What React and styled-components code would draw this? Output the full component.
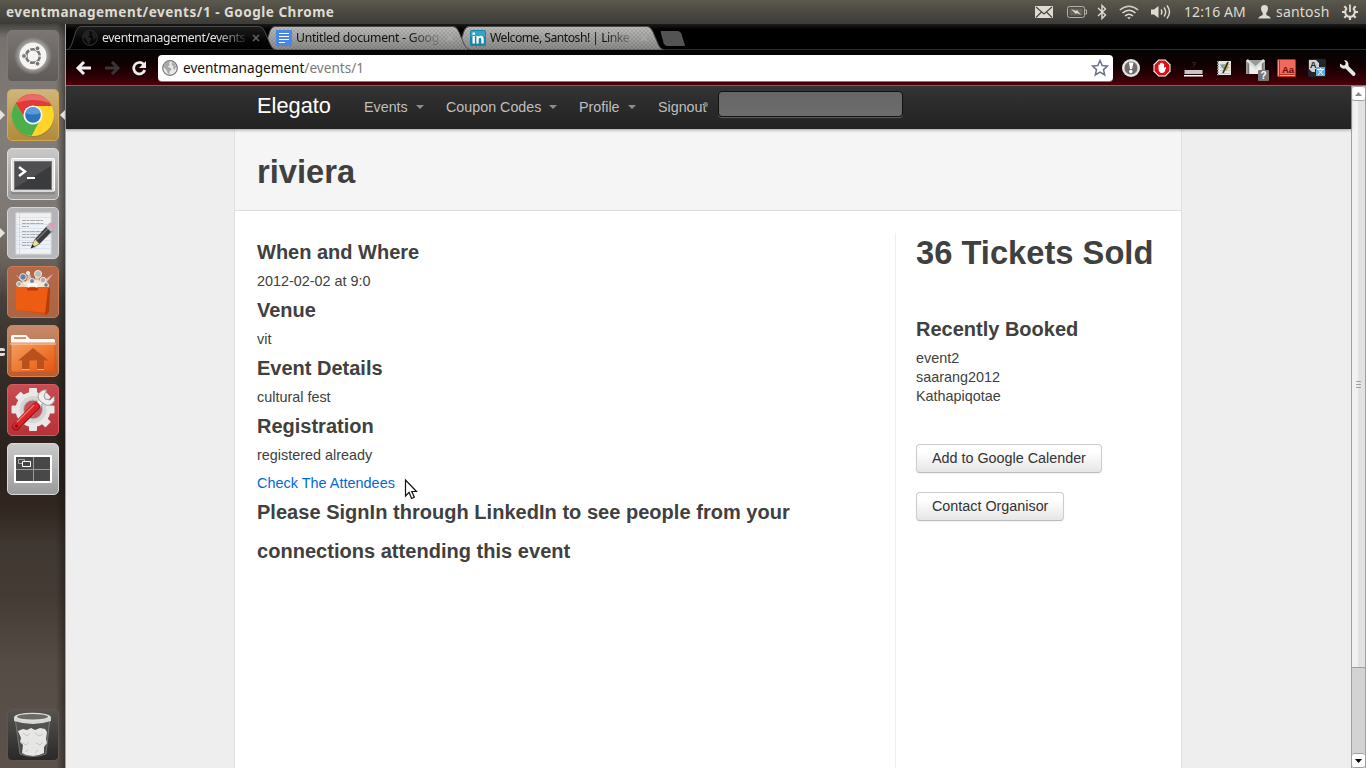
import React from "react";
import styled, { createGlobalStyle } from "styled-components";

const GlobalStyle = createGlobalStyle`
  * { box-sizing: border-box; }
  html, body { margin: 0; padding: 0; }
  body { width: 1366px; height: 768px; overflow: hidden; background: #eee; }
  svg { display: block; }
`;

const UI = `"Noto Sans", "Open Sans", sans-serif`;
const ARIAL = `"Liberation Sans", Arial, sans-serif`;

const Desktop = styled.div`
  width: 1366px;
  height: 768px;
  display: flex;
  flex-direction: column;
  overflow: hidden;
  position: relative;
`;

/* ---------- system panel ---------- */
const Panel = styled.header`
  height: 24px;
  flex: none;
  display: flex;
  align-items: center;
  background: linear-gradient(#5b584d, #3c3b37);
  color: #dfdbd2;
  font-family: ${UI};
`;
const WindowTitle = styled.div`
  font-size: 13.5px;
  font-weight: 700;
  line-height: 24px;
  padding-left: 6px;
  letter-spacing: 0.52px;
  white-space: nowrap;
  flex: 1;
`;
const Indicator = styled.div`
  width: ${(p) => p.$w}px;
  margin-right: ${(p) => p.$gap}px;
  font-size: 14px;
  letter-spacing: ${(p) => p.$spacing || "0"};
  line-height: 24px;
  white-space: nowrap;
  flex: none;
`;

/* ---------- launcher ---------- */
const Workspace = styled.div`
  flex: 1;
  display: flex;
  min-height: 0;
`;
const Launcher = styled.nav`
  width: 66px;
  flex: none;
  padding: 6px 0 7px 7px;
  display: flex;
  flex-direction: column;
  gap: 7px;
  border-right: 1px solid #a5a2a0;
  background: linear-gradient(90deg, transparent 56px, rgba(20, 15, 12, 0.45)),
    linear-gradient(#454340 0, #77726e 14px, #837d79 110px, #7e7874 190px, #67605b 240px, #46403b 275px,
      #362d28 340px, #2b211d 430px, #30251f 480px, #3f3731 520px, #443b35 570px, #554c45 640px, #5c524b 744px);
`;
const tones = {
  dash: ["#7b7673", "#5f5b58", "#7d7976"],
  gold: ["#d0b57c", "#b18a3a", "#d3a850"],
  silver: ["#c9c9c9", "#9b9b9b", "#dadada"],
  paper: ["#b3b2b5", "#b9b8bb", "#d5d4d6"],
  rust: ["#b4694b", "#ab6543", "#cf7a52"],
  folder: ["#c78a6a", "#b45e33", "#dc8350"],
  red: ["#c74c52", "#b53238", "#d95b60"],
  dark: ["#55534f", "#2a2928", "#5a5652"],
};
const Tile = styled.div`
  width: 52px;
  height: 52px;
  flex: none;
  border-radius: 5px;
  position: relative;
  border: 1px solid ${(p) => tones[p.$tone][2]};
  background: linear-gradient(${(p) => tones[p.$tone][0]}, ${(p) => tones[p.$tone][1]});
  margin-top: ${(p) => (p.$last ? "auto" : 0)};
  & > svg { position: absolute; left: -1px; top: -1px; }
`;
const Pip = styled.i`
  position: absolute;
  top: 20px;
  width: 0;
  height: 0;
  border: 5px solid transparent;
  ${(p) => (p.$right ? "left: 47px; border-right-color: #e6e4e2;" : "left: -8px; border-left-color: #e6e4e2;")}
`;
const PairPip = styled.i`
  position: absolute;
  left: -8px;
  top: 22px;
  width: 5px;
  height: 8px;
  border: solid #dedcda;
  border-width: 3px 0;
  border-radius: 0 2px 2px 0;
`;

/* ---------- browser chrome ---------- */
const Browser = styled.main`
  flex: 1;
  min-width: 0;
  display: flex;
  flex-direction: column;
`;
const TabStrip = styled.div`
  height: 26px;
  flex: none;
  display: flex;
  padding-top: 2px;
  background: linear-gradient(#1b1b1b, #000 6px);
  border-bottom: 1px solid #2c2c2c;
`;
const Tab = styled.div`
  position: relative;
  width: 210px;
  height: 24px;
  flex: none;
  margin-right: -16px;
  padding-left: 16px;
  display: flex;
  align-items: center;
  z-index: ${(p) => p.$z};
  font: 12.2px ${UI};
  color: ${(p) => (p.$active ? "#e4e4e4" : "#111")};
`;
const TabShape = styled.svg`
  position: absolute;
  left: 0;
  top: 0;
  z-index: -1;
`;
const TabLabel = styled.span`
  width: 146px;
  margin-left: 4px;
  white-space: nowrap;
  line-height: 22px;
  letter-spacing: ${(p) => p.$spacing};
  mask-image: linear-gradient(90deg, #000 114px, rgba(0, 0, 0, 0.12) 144px);
`;
const TabClose = styled.svg`
  margin-left: 4px;
`;
const NewTab = styled.svg`
  margin: 5px 0 0 12px;
`;
const Toolbar = styled.div`
  height: 36px;
  flex: none;
  display: flex;
  align-items: center;
  padding-left: 9px;
  background: linear-gradient(#050505 0, #100001 14px, #2b0004 26px, #500008);
  border-bottom: 1px solid #85696b;
`;
const NavButton = styled.span`
  width: 18px;
  margin-right: 10px;
`;
const Omnibox = styled.div`
  width: 955px;
  height: 26px;
  margin-left: -1px;
  display: flex;
  align-items: center;
  background: #fff;
  border-radius: 4px;
  box-shadow: 0 1px 0 #8e7274;
  padding: 0 4px;
  font: 13.6px ${UI};
  color: #111;
`;
const Url = styled.span`
  margin-left: 5px;
  flex: 1;
  line-height: 24px;
`;
const UrlPath = styled.span`
  color: #7a7a7a;
`;
const Extensions = styled.div`
  display: flex;
  margin-left: 9px;
  gap: 13px;
`;

/* ---------- page ---------- */
const Viewport = styled.div`
  flex: 1;
  display: flex;
  min-height: 0;
  background: #eee;
  font-family: ${ARIAL};
`;
const Page = styled.div`
  width: 1285px;
  display: flex;
  flex-direction: column;
`;
const Navbar = styled.div`
  height: 43px;
  flex: none;
  display: flex;
  align-items: center;
  padding: 0 0 2px 191px;
  position: relative;
  background: linear-gradient(#333, #222);
  box-shadow: 0 1px 3px rgba(0, 0, 0, 0.35);
`;
const Brand = styled.a`
  width: 107px;
  font-size: 21.8px;
  line-height: 40px;
  color: #fff;
  padding-bottom: 1px;
`;
const NavItem = styled.a`
  width: ${(p) => p.$w}px;
  display: flex;
  align-items: center;
  font-size: 14.3px;
  line-height: 40px;
  color: #bfbfbf;
  white-space: nowrap;
`;
const Caret = styled.i`
  margin-left: 8px;
  border: 4px solid transparent;
  border-top-color: #8e8e8e;
  border-bottom: 0;
`;
const Dot = styled.i`
  width: 4px;
  height: 5px;
  margin: -5px 0 0 -3px;
  border-radius: 2px;
  background: #777;
`;
const Search = styled.div`
  width: 185px;
  height: 26px;
  margin-top: -6px;
  border: 1px solid #111;
  border-radius: 4px;
  background: linear-gradient(#666, #6c6c6c);
  box-shadow: 0 1px 0 rgba(255, 255, 255, 0.25);
`;
const Sheet = styled.section`
  flex: 1;
  width: 948px;
  margin-left: 168px;
  display: flex;
  flex-direction: column;
  border: solid #e0e0e0;
  border-width: 0 1px;
  background: #fff;
`;
const SheetHeader = styled.div`
  height: 82px;
  flex: none;
  padding: 23px 22px 0;
  background: #f5f5f5;
  border-bottom: 1px solid #ddd;
`;
const H1 = styled.h1`
  margin: 0;
  font-size: 32.7px;
  line-height: 40px;
  font-weight: 700;
  color: #404040;
  white-space: nowrap;
`;
const H3 = styled.h3`
  margin: 0;
  font-size: 20px;
  line-height: 39px;
  font-weight: 700;
  letter-spacing: ${(p) => p.$spacing || "0"};
  color: #404040;
`;
const P = styled.p`
  margin: 0;
  font-size: 14.4px;
  line-height: 19px;
  color: #404040;
`;
const AttendeeLink = styled.a`
  display: block;
  margin-top: 9px;
  font-size: 14.4px;
  letter-spacing: 0.03px;
  line-height: 19px;
  color: #0069d6;
`;
const Columns = styled.div`
  flex: 1;
  display: flex;
`;
const Details = styled.div`
  width: 660px;
  padding: 22px 80px 0 22px;
`;
const Aside = styled.aside`
  flex: 1;
  margin-top: 22px;
  padding-left: 20px;
  border-left: 1px solid #eee;
  display: flex;
  flex-direction: column;
  align-items: flex-start;
`;
const Recent = styled.div`
  margin: 37px 0 19px;
`;
const Button = styled.button`
  height: 29px;
  padding: 0 15px 2px;
  margin-top: 19px;
  font: 14.35px/18px ${ARIAL};
  color: #333;
  white-space: nowrap;
  background: linear-gradient(#fff, #fff 25%, #e6e6e6);
  border: 1px solid #ccc;
  border-bottom-color: #bbb;
  border-radius: 4px;
  box-shadow: 0 1px 2px rgba(0, 0, 0, 0.05);
`;
const Scrollbar = styled.div`
  width: 15px;
  display: flex;
  flex-direction: column;
  background: #d3d3d3;
  border: solid #a0a0a0;
  border-width: 0 1px;
`;
const ArrowBox = styled.div`
  height: 15px;
  flex: none;
  display: flex;
  align-items: center;
  justify-content: center;
  background: #fff;
  border: solid #a0a0a0;
  border-width: 1px 0;
  border-radius: 3px;
`;
const Thumb = styled.div`
  height: 567px;
  display: flex;
  align-items: center;
  justify-content: center;
  background: linear-gradient(90deg, #f1f1f1 50%, #e2e2e2 50%);
  border-bottom: 1px solid #a0a0a0;
`;
const Track = styled.div`
  flex: 1;
`;
const Pointer = styled.svg`
  position: absolute;
  left: 404px;
  top: 478px;
`;

/* ---------- launcher drawings ---------- */
const DashIcon = () => (
  <svg width="52" height="52" viewBox="0 0 52 52">
    <defs><radialGradient id="dg"><stop offset=".55" stopColor="#fff" stopOpacity=".6" /><stop offset="1" stopColor="#fff" stopOpacity="0" /></radialGradient></defs>
    <circle cx="26" cy="26" r="19" fill="url(#dg)" />
    <circle cx="26" cy="26" r="13.5" fill="#f4f4f4" />
    <circle cx="26" cy="26" r="6.8" fill="none" stroke="#7a7572" strokeWidth="2.6" strokeDasharray="12.8 1.4" strokeDashoffset="-0.7" />
    <g fill="#7a7572" stroke="#f4f4f4" strokeWidth="1"><circle cx="17" cy="26" r="2.4" /><circle cx="30.5" cy="18.3" r="2.4" /><circle cx="30.5" cy="33.7" r="2.4" /></g>
  </svg>
);
const ChromeIcon = () => (
  <svg width="52" height="52" viewBox="0 0 52 52">
    <circle cx="26" cy="27" r="21.4" fill="#8f6d26" opacity=".35" />
    <circle cx="26" cy="26" r="21" fill="#ffd42a" />
    <path d="M26 17H44.900A21 21 0 0 0 8.600 14.200L18 30Z" fill="#e23b37" />
    <path d="M8.600 14.200A21 21 0 0 0 24.500 47L33 31 26 33 18 30Z" fill="#4bb04a" />
    <circle cx="26" cy="26" r="9.6" fill="#f6f6f6" />
    <circle cx="26" cy="26" r="7.800" fill="#2d73bd" />
    <path d="M18.500 24a7.800 7.800 0 0 1 15 0q-7.500 3-15 0Z" fill="#5b9ad8" />
    <path d="M9 14A21 21 0 0 1 43 14Q26 8 9 14Z" fill="#fff" opacity=".25" />
  </svg>
);
const TerminalIcon = () => (
  <svg width="52" height="52" viewBox="0 0 52 52">
    <rect x="4.500" y="10.500" width="43" height="35" rx="1" fill="#e5e5e5" stroke="#fff" />
    <rect x="4" y="43" width="44" height="3.500" fill="#8a8a8a" /><rect x="5" y="42" width="42" height="2" fill="#d8d8d8" />
    <rect x="7.500" y="13.500" width="37" height="28" fill="#3a3b3c" stroke="#777" />
    <path d="M8 14H44V18L8 40Z" fill="#58595a" opacity=".7" />
    <path d="m12 19 6 4.500-6 4.500" fill="none" stroke="#fff" strokeWidth="2.400" />
    <rect x="20" y="29" width="8" height="2" fill="#fff" />
  </svg>
);
const EditorIcon = () => (
  <svg width="52" height="52" viewBox="0 0 52 52">
    <rect x="9" y="6" width="35" height="41" fill="#f0f1f4" stroke="#ddd" />
    <path d="M9 10.500H44M9 17.500H44M9 21.500H44M9 25.500H44M9 29.500H44M9 33.500H44M9 37.500H44M9 41.500H44" stroke="#dbe3ee" />
    <path d="M12.500 6V47" stroke="#ecd0d3" />
    <path d="M15 13.500H36M15 16.500H37M15 19.500H22M15 24.500H37M15 27.500H35M15 30.500H30M15 35.500H26M15 38.500H24" stroke="#aaa" strokeWidth="1" strokeDasharray="4 .6 3 .7 5 .5" />
    <path d="M26 40 45 23" stroke="#777" strokeWidth="4" opacity=".4" />
    <path d="m28 32 12-13 5 5-12.500 13Z" fill="#3b3b3b" /><path d="m29.500 33 12-12" stroke="#777" strokeWidth="1.200" />
    <path d="m28 32 4.500 5-8.500 4Z" fill="#ece28f" stroke="#444" strokeWidth=".5" /><path d="m25.500 37.500-1.800 4 4-1.700Z" fill="#222" />
    <path d="m39 20 2.500-3 5 5-2.500 3Z" fill="#b9b9b9" /><path d="m41.500 17 1.500-1.300q3-.7 4.800 2l-.8 3.300-1 1Z" fill="#e996c2" />
  </svg>
);
const BagIcon = () => (
  <svg width="52" height="52" viewBox="0 0 52 52">
    <path d="m26 28-18-20 11 9 3-12 4 12 5-13 2 13 13-9-12 16Z" fill="#fff" opacity=".55" />
    <ellipse cx="27" cy="20" rx="15" ry="6" fill="#fff4e4" opacity=".75" />
    <g stroke="#eee" strokeWidth="1"><circle cx="16" cy="11" r="3.300" fill="#5886a8" /><circle cx="31" cy="8" r="3.500" fill="#bbb" /><circle cx="25" cy="15" r="2.500" fill="#6d85a5" /><circle cx="36" cy="14" r="2.800" fill="#c3a49a" /><circle cx="12" cy="18" r="2.400" fill="#aaa" /><circle cx="39" cy="19" r="2.300" fill="#777" /><circle cx="21" cy="7" r="1.500" fill="#ddd" /></g>
    <path d="M9 21H41L43 22 41 49 9 44Z" fill="#d94b0c" /><path d="M9 21H41V47L9 44Z" fill="#ee5c13" />
    <path d="m41 22 2 1-1 23-4 3Z" fill="#b83c08" />
    <path d="M21.500 23V18.500H29.500V23" fill="none" stroke="#fff" strokeWidth="2" /><rect x="20" y="21.500" width="11" height="3" fill="#bf3904" />
  </svg>
);
const HomeIcon = () => (
  <svg width="52" height="52" viewBox="0 0 52 52">
    <defs><linearGradient id="hf" x2="1" y2="1"><stop stopColor="#f3a066" /><stop offset=".5" stopColor="#ee7b33" /><stop offset="1" stopColor="#e75212" /></linearGradient></defs>
    <path d="M4 17V11.500Q4 10 5.500 10H19L23 14H46.500Q48 14 48 15.500V20H4Z" fill="#fff" /><rect x="7" y="12" width="12" height="2" fill="#e79060" />
    <path d="M4 18H48V45Q48 47 46 47H6Q4 47 4 45Z" fill="url(#hf)" stroke="#d5501a" strokeWidth=".7" />
    <path d="M3 19H49" stroke="#ffd5b5" />
    <path d="m26 23-15 12.500h4V45h7.500V35.500h7.500V45H37V35.500h4.500Z" fill="#bb501f" /><path d="M15 44.500h7.500M30 44.500h7" stroke="#f5b68c" />
  </svg>
);
const SettingsIcon = () => (
  <svg width="52" height="52" viewBox="0 0 52 52">
    {[0, 45, 90, 135].map((a) => <rect key={a} x="22" y="4" width="8" height="43" rx="1" fill="#e8e8e8" transform={`rotate(${a} 26 25.500)`} />)}
    <circle cx="26" cy="25.500" r="17.500" fill="#e8e8e8" /><circle cx="26" cy="25.500" r="13.500" fill="#d5d5d5" /><circle cx="26" cy="25.500" r="9.500" fill="#c3555a" stroke="#bbb" />
    <path d="m23 31 13-15" stroke="#aaa" strokeWidth="5.500" /><path d="m23 30 13-15" stroke="#f4f4f4" strokeWidth="4.500" />
    <path d="M33 17q-4-5 0-9 3-3 7-2l-3 5 1 4 5 1 4-4q2 5-2 8-5 3-9-1Z" fill="#eee" stroke="#888" strokeWidth=".8" />
    <path d="m9 42.500 20-20" stroke="#8f1114" strokeWidth="8" strokeLinecap="round" /><path d="m9 42 20-20" stroke="#dc2226" strokeWidth="6.500" strokeLinecap="round" /><path d="m10 38 17-17" stroke="#f17a7c" strokeWidth="1.300" />
    <circle cx="9.500" cy="42" r="1.500" fill="#7c1013" />
  </svg>
);
const WorkspaceIcon = () => (
  <svg width="52" height="52" viewBox="0 0 52 52">
    <rect x="7" y="12" width="38" height="28" rx="1" fill="#fff" />
    <rect x="9" y="14" width="34" height="24" fill="#484848" />
    <path d="M9 26.500H43M26.500 14V38" stroke="#9b9b9b" /><path d="M11.500 16.500h6v4h-6Z" fill="none" stroke="#aaa" /><path d="M15.500 18.500h8v5h-8Z" fill="#444" stroke="#fff" />
  </svg>
);
const TrashIcon = () => (
  <svg width="52" height="52" viewBox="0 0 52 52">
    <path d="M8 8H43L39 45Q26 50 13 45Z" fill="#5a5957" opacity=".65" stroke="#aaa" strokeWidth=".8" />
    <path d="m11 22 5-2 4 1 4-2 4 2 5-2 5 1 2 3-1 7 1 4-3 4v6l-5 2-6 1-7-1-4-2 1-8-3-3 1-4Z" fill="#e6e6e4" />
    <path d="m16 24 4 3 3-3M28 24l4 3 4-2M14 33l5 3 3-3M29 34l4 2 3-3M19 43l2-3M28 44l3-3" fill="none" stroke="#c6c6c3" />
    <ellipse cx="25.500" cy="8.500" rx="18.500" ry="4.800" fill="#dcdcda" /><ellipse cx="25.500" cy="7.800" rx="15.500" ry="2.800" fill="#6b6a68" />
    <path d="M7 9q18 7 37 0v3q-18 6-37 0Z" fill="#d6d6d4" />
  </svg>
);

/* ---------- panel drawings ---------- */
const fg = "#dfdbd2";
const MailIcon = () => (
  <svg width="18" height="12" viewBox="0 0 18 12"><rect width="18" height="12" fill={fg} /><path d="m1 1 8 7 8-7M1 11.500l5.500-5.500M17 11.500 11.500 6" fill="none" stroke="#4a4840" strokeWidth="1.200" /></svg>
);
const BatteryIcon = () => (
  <svg width="20" height="12" viewBox="0 0 20 12"><rect x=".5" y=".5" width="17" height="11" rx="2" fill="none" stroke="#b4b1a7" /><path d="M18 4h1.500v4H18" fill="none" stroke="#b4b1a7" /><rect x="2.500" y="2.500" width="13" height="7" fill="#66635a" /><path d="m4 3 5 2 1-1 4 5-4-2-1 1Z" fill={fg} /></svg>
);
const BluetoothIcon = () => (
  <svg width="10" height="16" viewBox="0 0 10 16"><path d="m1 4 7.500 7L5 14.500V1.500L8.500 5 1 12" fill="none" stroke={fg} strokeWidth="1.400" /></svg>
);
const WifiIcon = () => (
  <svg width="20" height="15" viewBox="0 0 20 15" fill="none" stroke={fg} strokeWidth="1.600"><path d="M.8 5Q10-2.500 19.200 5" opacity=".9" /><path d="M3.500 8Q10 2.500 16.500 8" /><path d="M6 11Q10 7.500 14 11" /><path d="m8 12.300h4l-2 2Z" fill={fg} stroke="none" /></svg>
);
const SoundIcon = () => (
  <svg width="20" height="16" viewBox="0 0 20 16"><path d="M0 5.500h3L7.500 2v12L3 10.500H0Z" fill={fg} /><path d="M10 5.500q1.800 2.500 0 5M13 3.500q3.400 4.500 0 9M16 1.500q5 6.500 0 13" fill="none" stroke={fg} strokeWidth="1.400" /></svg>
);
const UserIcon = () => (
  <svg width="13" height="14" viewBox="0 0 13 14"><path d="M3 3.500Q3 0 6.500 0T10 3.500Q9.800 7 8.300 8v2q3.700 1 4.700 3.500H0Q1 11 4.700 10V8Q3.200 7 3 3.500Z" fill={fg} /></svg>
);
const PowerIcon = () => (
  <svg width="16" height="16" viewBox="0 0 16 16"><g stroke={fg} strokeWidth="2.200"><path d="M8 13v3M0 8h3M13 8h3M2.300 2.300l2 2M13.700 2.300l-2 2M2.300 13.700l2-2M13.700 13.700l-2-2" /></g><path d="M5 4.200a4.800 4.800 0 1 0 6 0" fill="none" stroke={fg} strokeWidth="2" /><path d="M8 .5V8" stroke={fg} strokeWidth="1.800" /></svg>
);

/* ---------- browser drawings ---------- */
const Globe = ({ dim }) => (
  <svg width="16" height="16" viewBox="0 0 16 16">
    <circle cx="8" cy="8" r="7.300" fill={dim ? "#090909" : "#e8e8e8"} stroke={dim ? "#2b2b2b" : "#747474"} strokeWidth="1.200" />
    <path d="m2 4 3-2.500 3 .5-1 2 1 1-2 1.500 1 1 2 .5.500 1.500-2 2V14L6 13.500 4.500 10 2 7.500ZM10 2l3 2 1 3-1.500 3-1.500-2 .5-2-2-1Z" fill={dim ? "#232323" : "#a8a8a8"} />
  </svg>
);
const DocsIcon = () => (
  <svg width="16" height="16" viewBox="0 0 16 16"><rect width="16" height="16" fill="#4a86e8" /><path d="M3 3.500h10M3 6.500h10M3 9.500h10M3 12.500h6" stroke="#fff" strokeWidth="1.200" /></svg>
);
const LinkedinIcon = () => (
  <svg width="16" height="16" viewBox="0 0 16 16"><rect width="16" height="16" rx="1.500" fill="#1686ae" /><rect x="1" y="1" width="14" height="6" fill="#36a2c6" /><path d="M2.500 6h2.400v7.500H2.500ZM2.500 2.500h2.400v2.200H2.500ZM6.400 6h2.300v1q2-2 4-.600 1 .8 1 2.600v4.500h-2.400V9.500q0-1.700-1.200-1.700-1.400 0-1.400 1.700v4H6.400Z" fill="#fff" /></svg>
);
const tabPath = "M0 24Q3 23 4.500 19L9 5Q10.500.500 14 .500H192Q195.500.500 197.500 5L203.500 19Q205 23 209 24Z";
const TabBack = ({ active }) => (
  <TabShape width="212" height="24" viewBox="0 0 212 24">
    <defs>
      <linearGradient id="tg" x2="0" y2="1"><stop stopColor="#bdbdbb" /><stop offset="1" stopColor="#888" /></linearGradient>
      <linearGradient id="ta" x2="0" y2="1"><stop stopColor="#1d1d1d" /><stop offset=".6" stopColor="#050505" /><stop offset="1" stopColor="#000" /></linearGradient>
      <pattern id="weave" width="4" height="4" patternUnits="userSpaceOnUse"><path d="M0 0h2v2H0ZM2 2h2v2H2Z" fill="#000" opacity=".09" /></pattern>
    </defs>
    <g transform="translate(1 0)">
      <path d={tabPath} fill={active ? "url(#ta)" : "url(#tg)"} stroke={active ? "#484848" : "#4c4c4c"} strokeWidth="1" />
      {!active && <path d={tabPath} fill="url(#weave)" />}
    </g>
  </TabShape>
);
const Close = ({ color }) => (
  <TabClose width="8" height="8" viewBox="0 0 8 8"><path d="m1 1 6 6m0-6L1 7" stroke={color} strokeWidth="1.500" /></TabClose>
);
const Arrow = ({ flip, color }) => (
  <svg width="18" height="18" viewBox="0 0 18 18"><path d={flip ? "M2 9H14M9 3l6 6-6 6" : "M16 9H4M9 3 3 9l6 6"} fill="none" stroke={color} strokeWidth="3" /></svg>
);
const Reload = () => (
  <svg width="18" height="18" viewBox="0 0 18 18"><path d="M12.500 5.200A5.700 5.700 0 1 0 13.800 11" fill="none" stroke="#eee" strokeWidth="2.700" /><path d="M15 2v7H8Z" fill="#eee" /></svg>
);
const Star = () => (
  <svg width="18" height="18" viewBox="0 0 18 18"><path d="m9 1.500 2.200 5 5.300.500-4 3.600 1.200 5.400L9 13.200 4.300 16l1.200-5.400-4-3.600 5.300-.500Z" fill="#fff" stroke="#66718c" strokeWidth="1.500" /></svg>
);
const Ext1 = () => (
  <svg width="18" height="18" viewBox="0 0 18 18"><circle cx="9" cy="9" r="9" fill="#e2e2e2" /><circle cx="9" cy="9" r="7" fill="#6e6e6e" stroke="#f4f4f4" strokeWidth=".8" /><path d="M7 3.500h4.500L10 10H8Z" fill="#fff" /><circle cx="8.800" cy="12.500" r="1.700" fill="#fff" /></svg>
);
const Ext2 = () => (
  <svg width="18" height="18" viewBox="0 0 18 18"><path d="M5.500.5h7l5 5v7l-5 5h-7l-5-5v-7Z" fill="#fff" /><path d="M6 1.500h6L16.500 6v6L12 16.500H6L1.500 12V6Z" fill="#d80f12" /><path d="M5.500 10V6q.8-.8 1.400 0V4.500q.8-.8 1.400 0V4q.8-.8 1.400 0v1q.8-.8 1.400 0v4l1-1q1.500-.2 1 1L11.500 13q-1 1-3 1-2.500-.3-3-4Z" fill="#fff" /></svg>
);
const Small = styled.text`
  font-family: ${ARIAL};
`;
const Ext3 = () => (
  <svg width="19" height="18" viewBox="0 0 19 18"><Small x="7.500" y="8" fontSize="8" fill="#4a4a4a">?</Small><rect x=".5" y="11" width="18" height="4" fill="#c5c5c5" /><rect y="16" width="19" height="1.500" fill="#fff" /></svg>
);
const Ext4 = () => (
  <svg width="18" height="18" viewBox="0 0 18 18"><rect x="3" y="2" width="13" height="14" fill="#e6e6e0" /><path d="M5 5.500h10M5 8.500h10M5 11.500h10M5 14.500h10" stroke="#c4c4bd" /><path d="M3 2v15" stroke="#999" strokeWidth="2" strokeDasharray="1.300 1.300" /><path d="m5 6 7-1-2 7Z" fill="#67a7b6" /><path d="m9 6 4-3 .5 6-3 3Z" fill="#e4a329" /><path d="m8 14 5-11" stroke="#28353b" strokeWidth="1.800" /></svg>
);
const Ext5 = () => (
  <svg width="23" height="22" viewBox="0 0 23 22"><rect y="1" width="19" height="14" fill="#9a9a9a" /><path d="M2.500 15V2l7 7 7-7V15" fill="#eee" stroke="#777" strokeWidth="1.500" /><path d="m1 1 8.500 8L18 1" fill="none" stroke="#ddd" strokeWidth="2.500" /><rect x="12" y="11" width="11" height="11" rx="1" fill="#777" /><Small x="14.500" y="20" fontSize="10" fontWeight="700" fill="#fff">?</Small></svg>
);
const Ext6 = () => (
  <svg width="19" height="18" viewBox="0 0 19 18"><rect width="19" height="18" rx="1.500" fill="#c92a1d" /><rect x="3" y="1" width="15" height="14" fill="#ef6a5c" /><path d="M1.500 1v16" stroke="#f6948a" /><path d="M3 16.500h15" stroke="#f8b4aa" /><Small x="5" y="14" fontSize="9.500" fontWeight="700" fill="#6b0c07">Aa</Small></svg>
);
const Ext7 = () => (
  <svg width="18" height="18" viewBox="0 0 18 18"><rect width="18" height="18" rx="2" fill="#23272c" /><path d="M1 1h7l3 3v6H7v3H4l-3-3Z" fill="#d2d2d2" /><Small x="2" y="8.500" fontSize="9" fontWeight="700" fill="#222">A</Small><rect x="8" y="8" width="9" height="9" fill="#69a8de" /><path d="M9 10.500h7M12.500 9v1.500M10 16l4.500-5M15 16l-4-4.500" stroke="#fff" strokeWidth="1" /></svg>
);
const Wrench = () => (
  <svg width="18" height="18" viewBox="0 0 18 18"><path d="M1 4.500q-.7 5 4 5.300l1.500-.3 7.500 7.500q2.500 0 2.500-2.800L9.500 7q.5-5.500-4.500-6L6.800 4 6 6.300 4 6.600Z" fill="#e8e8e8" /></svg>
);

const apps = [
  { tone: "dash", Icon: DashIcon },
  { tone: "gold", Icon: ChromeIcon, left: true, right: true },
  { tone: "silver", Icon: TerminalIcon },
  { tone: "paper", Icon: EditorIcon, left: true },
  { tone: "rust", Icon: BagIcon },
  { tone: "folder", Icon: HomeIcon, pair: true },
  { tone: "red", Icon: SettingsIcon },
  { tone: "silver", Icon: WorkspaceIcon },
];
const details = [
  ["When and Where", "2012-02-02 at 9:0"],
  ["Venue", "vit"],
  ["Event Details", "cultural fest"],
  ["Registration", "registered already"],
];
const ExtSlot = styled.span`
  width: 18px;
  height: 18px;
`;

export default function App() {
  return (
    <Desktop>
      <GlobalStyle />
      <Panel>
        <WindowTitle>eventmanagement/events/1 - Google Chrome</WindowTitle>
        <Indicator $w={18} $gap={14}><MailIcon /></Indicator>
        <Indicator $w={20} $gap={10}><BatteryIcon /></Indicator>
        <Indicator $w={10} $gap={12}><BluetoothIcon /></Indicator>
        <Indicator $w={20} $gap={12}><WifiIcon /></Indicator>
        <Indicator $w={20} $gap={13}><SoundIcon /></Indicator>
        <Indicator $w={62} $gap={12} $spacing="0.1px">12:16 AM</Indicator>
        <Indicator $w={13} $gap={5}><UserIcon /></Indicator>
        <Indicator $w={54} $gap={12} $spacing="0.2px">santosh</Indicator>
        <Indicator $w={16} $gap={8}><PowerIcon /></Indicator>
      </Panel>
      <Workspace>
        <Launcher>
          {apps.map(({ tone, Icon, left, right, pair }, i) => (
            <Tile key={i} $tone={tone}>
              <Icon />
              {left && <Pip />}
              {right && <Pip $right />}
              {pair && <PairPip />}
            </Tile>
          ))}
          <Tile $tone="dark" $last><TrashIcon /></Tile>
        </Launcher>
        <Browser>
          <TabStrip>
            <Tab $active $z={3}><TabBack active /><Globe dim /><TabLabel $spacing="-0.35px">eventmanagement/events</TabLabel><Close color="#666" /></Tab>
            <Tab $z={2}><TabBack /><DocsIcon /><TabLabel $spacing="-0.25px">Untitled document - Goog</TabLabel><Close color="#aaa" /></Tab>
            <Tab $z={1}><TabBack /><LinkedinIcon /><TabLabel $spacing="-0.52px">Welcome, Santosh! | Linke</TabLabel><Close color="#aaa" /></Tab>
            <NewTab width="26" height="15" viewBox="0 0 26 15"><path d="M1 .500H18Q20 .500 21 3L24.500 14.500H7Q5 14.500 4 12Z" fill="#535353" stroke="#6e6e6e" strokeWidth=".6" /></NewTab>
          </TabStrip>
          <Toolbar>
            <NavButton><Arrow color="#eee" /></NavButton>
            <NavButton><Arrow flip color="#3b3436" /></NavButton>
            <NavButton><Reload /></NavButton>
            <Omnibox><Globe /><Url>eventmanagement<UrlPath>/events/1</UrlPath></Url><Star /></Omnibox>
            <Extensions>
              {[Ext1, Ext2, Ext3, Ext4, Ext5, Ext6, Ext7, Wrench].map((E, i) => <ExtSlot key={i}><E /></ExtSlot>)}
            </Extensions>
          </Toolbar>
          <Viewport>
            <Page>
              <Navbar>
                <Brand>Elegato</Brand>
                <NavItem $w={82}>Events<Caret /></NavItem>
                <NavItem $w={133}>Coupon Codes<Caret /></NavItem>
                <NavItem $w={79}>Profile<Caret /></NavItem>
                <NavItem $w={60}>Signout<Dot /></NavItem>
                <Search />
              </Navbar>
              <Sheet>
                <SheetHeader><H1>riviera</H1></SheetHeader>
                <Columns>
                  <Details>
                    {details.map(([h, t]) => <React.Fragment key={h}><H3>{h}</H3><P>{t}</P></React.Fragment>)}
                    <AttendeeLink>Check The Attendees</AttendeeLink>
                    <H3 $spacing="0.03px">Please SignIn through LinkedIn to see people from your connections attending this event</H3>
                  </Details>
                  <Aside>
                    <H1>36 Tickets Sold</H1>
                    <Recent>
                      <H3>Recently Booked</H3>
                      <P>event2</P>
                      <P>saarang2012</P>
                      <P>Kathapiqotae</P>
                    </Recent>
                    <Button>Add to Google Calender</Button>
                    <Button>Contact Organisor</Button>
                  </Aside>
                </Columns>
              </Sheet>
            </Page>
            <Scrollbar>
              <ArrowBox><svg width="7" height="4" viewBox="0 0 7 4"><path d="M3.500 0 7 4H0Z" fill="#8a8a8a" /></svg></ArrowBox>
              <Thumb><svg width="5" height="7" viewBox="0 0 5 7"><path d="M0 .500h5M0 3.500h5M0 6.500h5" stroke="#a0a0a0" /></svg></Thumb>
              <Track />
              <ArrowBox><svg width="7" height="4" viewBox="0 0 7 4"><path d="M0 0h7L3.500 4Z" fill="#000" /></svg></ArrowBox>
            </Scrollbar>
          </Viewport>
        </Browser>
      </Workspace>
      <Pointer width="16" height="24" viewBox="0 0 16 24"><path d="M1.500 2v16l3.600-3.600L7.600 20.500l2.700-1.200L7.800 13.500H12.500Z" fill="#fff" stroke="#111" strokeWidth="1.200" /></Pointer>
    </Desktop>
  );
}
